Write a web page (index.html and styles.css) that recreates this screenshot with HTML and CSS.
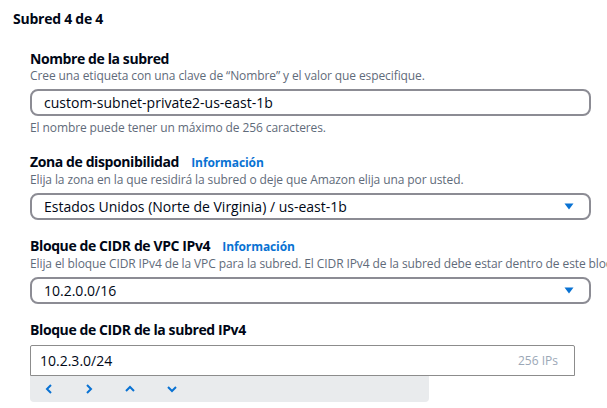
FILE: index.html
```html
<!DOCTYPE html>
<html lang="es">
<head>
<meta charset="utf-8">
<link rel="stylesheet" href="styles.css">
</head>
<body>
<div class="page">
  <h2 class="title">Subred 4 de 4</h2>
  <div class="fields">
    <div class="field">
      <div class="label">Nombre de la subred</div>
      <div class="desc">Cree una etiqueta con una clave de “Nombre” y el valor que especifique.</div>
      <div class="control round">custom-subnet-private2-us-east-1b</div>
      <div class="hint">El nombre puede tener un máximo de 256 caracteres.</div>
    </div>
    <div class="field">
      <div class="label">Zona de disponibilidad <a class="info">Información</a></div>
      <div class="desc">Elija la zona en la que residirá la subred o deje que Amazon elija una por usted.</div>
      <div class="control round select">
        <span>Estados Unidos (Norte de Virginia) / us-east-1b</span>
        <svg class="caret" width="10" height="7" viewBox="0 0 10 7"><path d="M0.5 0.5 H9.5 L5 6.5 Z" fill="#0972d3"/></svg>
      </div>
    </div>
    <div class="field">
      <div class="label">Bloque de CIDR de VPC IPv4 <a class="info">Información</a></div>
      <div class="desc clip">Elija el bloque CIDR IPv4 de la VPC para la subred. El CIDR IPv4 de la subred debe estar dentro de este bloque.</div>
      <div class="control round select">
        <span>10.2.0.0/16</span>
        <svg class="caret" width="10" height="7" viewBox="0 0 10 7"><path d="M0.5 0.5 H9.5 L5 6.5 Z" fill="#0972d3"/></svg>
      </div>
    </div>
    <div class="field">
      <div class="label">Bloque de CIDR de la subred IPv4</div>
      <div class="cidr">
        <span>10.2.3.0/24</span>
        <span class="ips">256 IPs</span>
      </div>
      <div class="stepper">
        <svg width="10" height="12" viewBox="0 0 10 12"><path d="M7 2 L3 6 L7 10" fill="none" stroke="#0972d3" stroke-width="2"/></svg>
        <svg width="10" height="12" viewBox="0 0 10 12"><path d="M3 2 L7 6 L3 10" fill="none" stroke="#0972d3" stroke-width="2"/></svg>
        <svg width="12" height="10" viewBox="0 0 12 10"><path d="M2 7 L6 3 L10 7" fill="none" stroke="#0972d3" stroke-width="2"/></svg>
        <svg width="12" height="10" viewBox="0 0 12 10"><path d="M2 3 L6 7 L10 3" fill="none" stroke="#0972d3" stroke-width="2"/></svg>
      </div>
    </div>
  </div>
</div>
</body>
</html>
```

FILE: styles.css
```css
* { box-sizing: border-box; }
html, body {
  margin: 0;
  background: #ffffff;
  overflow: hidden;
}
body {
  font-family: "Open Sans", "Noto Sans", sans-serif;
  color: #000716;
  width: 607px;
  height: 408px;
}
.page {
  padding: 10px 0 0 13px;
}
.title {
  margin: 0;
  font-size: 14px;
  line-height: 18px;
  font-weight: 700;
  letter-spacing: -0.25px;
}
.fields {
  padding-left: 17px;
  padding-top: 22px;
  display: flex;
  flex-direction: column;
  gap: 17px;
}
.field {
  display: flex;
  flex-direction: column;
}
.label {
  font-size: 14px;
  line-height: 18px;
  font-weight: 700;
  letter-spacing: -0.4px;
}
.info {
  color: #0972d3;
  font-size: 12px;
  font-weight: 700;
  margin-left: 9px;
  letter-spacing: -0.1px;
}
.desc, .hint {
  font-size: 12px;
  line-height: 16px;
  color: #5f6b7a;
  letter-spacing: -0.1px;
}
.clip {
  white-space: nowrap;
  width: 577px;
  overflow: hidden;
}
.desc {
  margin-bottom: 5px;
}
.hint {
  margin-top: 4px;
}
.control {
  width: 561px;
  height: 27px;
  font-size: 14px;
  display: flex;
  align-items: center;
  padding-left: 12px;
  color: #000716;
}
.round {
  border: 2px solid #8c8c94;
  border-radius: 8px;
}
.select {
  justify-content: space-between;
  padding-right: 15px;
}
.caret {
  display: block;
}
.cidr {
  margin-top: 6px;
  width: 545px;
  height: 31px;
  border: 1px solid #8c8c8c;
  border-radius: 2px 2px 0 0;
  display: flex;
  align-items: center;
  justify-content: space-between;
  padding: 0 16px 0 9px;
  font-size: 14px;
}
.ips {
  color: #9ba7b6;
  font-size: 12px;
}
.stepper {
  width: 399px;
  height: 26px;
  background: #e9ebed;
  border-radius: 0 0 4px 4px;
  display: flex;
  align-items: center;
  gap: 30px;
  padding-left: 14px;
}
.stepper svg { display: block; }
```
